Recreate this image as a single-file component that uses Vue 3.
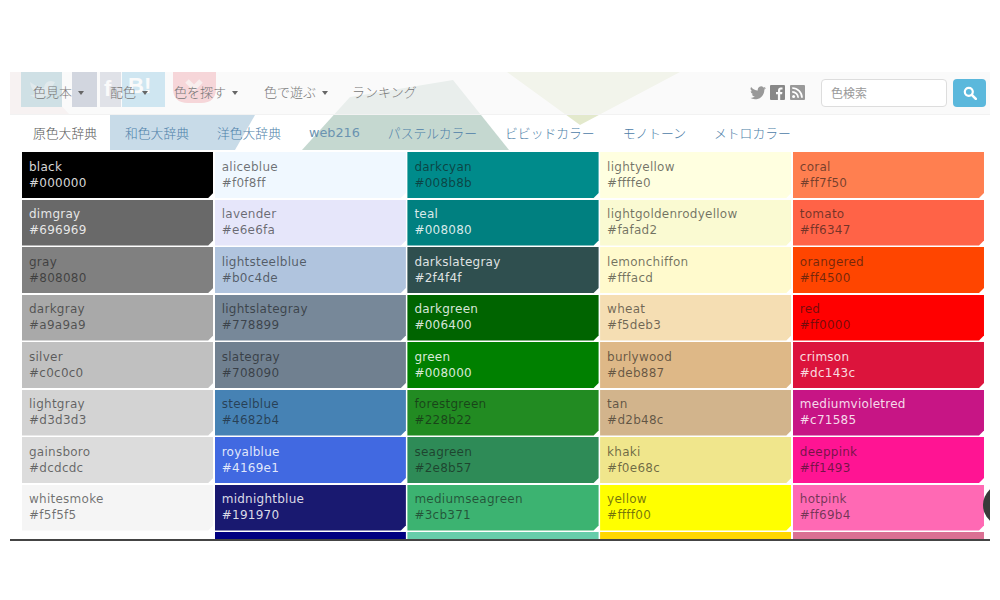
<script setup>
const navItems = [
  { label: '色見本', caret: true },
  { label: '配色', caret: true },
  { label: '色を探す', caret: true },
  { label: '色で遊ぶ', caret: true },
  { label: 'ランキング', caret: false },
];
const tabs = ['原色大辞典', '和色大辞典', '洋色大辞典', 'web216', 'パステルカラー', 'ビビッドカラー', 'モノトーン', 'メトロカラー'];

// row by row, w = white text, otherwise the text is a dark shade over the colour
const colors = [
  ['black', '#000000', 'w'], ['aliceblue', '#f0f8ff'], ['darkcyan', '#008b8b'], ['lightyellow', '#ffffe0'], ['coral', '#ff7f50'],
  ['dimgray', '#696969', 'w'], ['lavender', '#e6e6fa'], ['teal', '#008080', 'w'], ['lightgoldenrodyellow', '#fafad2'], ['tomato', '#ff6347'],
  ['gray', '#808080'], ['lightsteelblue', '#b0c4de'], ['darkslategray', '#2f4f4f', 'w'], ['lemonchiffon', '#fffacd'], ['orangered', '#ff4500'],
  ['darkgray', '#a9a9a9'], ['lightslategray', '#778899'], ['darkgreen', '#006400', 'w'], ['wheat', '#f5deb3'], ['red', '#ff0000'],
  ['silver', '#c0c0c0'], ['slategray', '#708090'], ['green', '#008000', 'w'], ['burlywood', '#deb887'], ['crimson', '#dc143c', 'w'],
  ['lightgray', '#d3d3d3'], ['steelblue', '#4682b4'], ['forestgreen', '#228b22'], ['tan', '#d2b48c'], ['mediumvioletred', '#c71585', 'w'],
  ['gainsboro', '#dcdcdc'], ['royalblue', '#4169e1', 'w'], ['seagreen', '#2e8b57'], ['khaki', '#f0e68c'], ['deeppink', '#ff1493'],
  ['whitesmoke', '#f5f5f5'], ['midnightblue', '#191970', 'w'], ['mediumseagreen', '#3cb371'], ['yellow', '#ffff00'], ['hotpink', '#ff69b4'],
];
// the next row is cut off by the frame before its text starts
const peekRow = ['#ffffff', '#000080', '#66cdaa', '#ffd700', '#db7093'];
</script>

<template>
  <div class="page">
    <div class="frame">
      <svg class="backdrop" width="980" height="467" viewBox="0 0 980 467">
        <polygon points="0,0 20,0 60,43 0,43" fill="#f3e4e4" />
        <polygon points="292,78 340,25 443,8 499,78" fill="#c5d8d0" />
        <polygon points="100,43 245,43 225,78 100,78" fill="#c8dbe8" />
        <polygon points="497,0 570,53 670,0" fill="#e3e9cc" />
        <rect x="11" y="0" width="41" height="35" fill="#6fa9b8" />
        <path d="M20 10q8 6 14 6q1-7 7-7l4 1-3 5q-1 10-12 11q-6 0-10-3q5 0 7-2q-6-3-7-11z" fill="#a9c7d1" />
        <rect x="62" y="0" width="25" height="35" fill="#7a86a6" />
        <rect x="90" y="0" width="21" height="35" fill="#a8aec4" />
        <text x="94" y="24" class="ghost-mark">f</text>
        <rect x="112" y="0" width="43" height="35" fill="#70bde0" />
        <text x="118" y="21" class="ghost-mark">B!</text>
        <path d="M163 0h43v16q0 15-15 15h-13q-15 0-15-15z" fill="#f0868f" />
        <path d="M177 9l7 7 7-7" fill="none" stroke="#f7d5d8" stroke-width="5" />
      </svg>

      <nav class="navbar">
        <ul class="menu">
          <li v-for="item in navItems" :key="item.label" class="menu-item">
            {{ item.label }}<span v-if="item.caret" class="caret"></span>
          </li>
        </ul>
        <div class="tools">
          <svg class="tool-icon" width="16" height="14" viewBox="0 0 24 20">
            <path fill="#999" d="M24 2.400a9.800 9.800 0 0 1-2.800.8A5 5 0 0 0 23.300.500a10 10 0 0 1-3.100 1.200 4.900 4.900 0 0 0-8.400 4.500A14 14 0 0 1 1.700.900a4.900 4.900 0 0 0 1.500 6.600 4.900 4.900 0 0 1-2.200-.6v.1a4.900 4.900 0 0 0 3.900 4.800 5 5 0 0 1-2.200.1 4.900 4.900 0 0 0 4.600 3.400A9.900 9.900 0 0 1 0 17.300 14 14 0 0 0 7.500 19.500c9.100 0 14-7.500 14-14v-.6A10 10 0 0 0 24 2.400z" />
          </svg>
          <svg class="tool-icon" width="15" height="15" viewBox="0 0 15 15">
            <path fill="#888" d="M1 0h13a1 1 0 0 1 1 1v13a1 1 0 0 1-1 1h-3.800V9.300h1.900l.3-2.200h-2.200V5.700c0-.6.200-1.100 1.100-1.100h1.200V2.600c-.2 0-.9-.1-1.700-.1-1.700 0-2.800 1-2.800 2.900v1.700H6v2.200h1.900V15H1a1 1 0 0 1-1-1V1a1 1 0 0 1 1-1z" />
          </svg>
          <svg class="tool-icon rss" width="15" height="15" viewBox="0 0 15 15">
            <rect width="15" height="15" rx="1" fill="#999" />
            <circle cx="3.600" cy="11.400" r="1.500" fill="#fff" />
            <path d="M2.200 6.800a6 6 0 0 1 6 6M2.200 3a9.800 9.800 0 0 1 9.800 9.800" fill="none" stroke="#fff" stroke-width="1.700" />
          </svg>
          <input class="search" type="text" placeholder="色検索" />
          <button class="search-btn" type="button" aria-label="検索">
            <svg width="14" height="14" viewBox="0 0 14 14">
              <circle cx="5.800" cy="5.800" r="4" fill="none" stroke="#fff" stroke-width="2.200" />
              <path d="M8.800 8.800l4 4" stroke="#fff" stroke-width="2.600" stroke-linecap="round" />
            </svg>
          </button>
        </div>
      </nav>

      <ul class="tabs">
        <li
          v-for="(tab, i) in tabs"
          :key="tab"
          class="tab"
          :class="{ active: i === 0, latin: tab === 'web216' }"
        >{{ tab }}</li>
      </ul>

      <div class="grid">
        <div
          v-for="c in colors"
          :key="c[0]"
          class="cell"
          :class="{ light: c[2] === 'w' }"
          :style="{ backgroundColor: c[1] }"
        >
          <div>{{ c[0] }}</div>
          <div>{{ c[1] }}</div>
        </div>
        <div v-for="bg in peekRow" :key="bg" class="cell" :style="{ backgroundColor: bg }"></div>
      </div>

      <div class="scroll-dot"></div>
    </div>
  </div>
</template>

<style>
body {
  background: #fff;
}
</style>

<style scoped>
.page {
  height: 600px;
  box-sizing: border-box;
  padding: 72px 10px 0;
  font-family: "DejaVu Sans", "Noto Sans CJK JP", sans-serif;
}
.frame {
  position: relative;
  height: 467px;
  overflow: hidden;
  border-bottom: 2px solid #444;
}
.backdrop {
  position: absolute;
  left: 0;
  top: 0;
}
.ghost-mark {
  font-family: "Liberation Sans", sans-serif;
  font-weight: 700;
  font-size: 22px;
  fill: #fff;
}
.navbar {
  position: relative;
  height: 43px;
  display: flex;
  align-items: center;
  justify-content: space-between;
  padding: 0 4px 0 23px;
  background: rgba(248, 248, 248, 0.7);
  border-bottom: 1px solid #f2f2f2;
  box-sizing: border-box;
}
.menu,
.tabs {
  list-style: none;
  margin: 0;
  padding: 0;
  display: flex;
}
.menu {
  gap: 26px;
  margin-top: -3px;
}
.menu-item {
  font-size: 13px;
  color: #777;
  font-family: "Noto Sans CJK JP", sans-serif;
  font-weight: 300;
}
.menu-item:last-child {
  margin-left: -2px;
}
.caret {
  display: inline-block;
  margin-left: 6px;
  vertical-align: middle;
  border-top: 4px solid #666;
  border-left: 3.500px solid transparent;
  border-right: 3.500px solid transparent;
}
.tools {
  display: flex;
  align-items: center;
  margin-top: -1px;
}
.tool-icon {
  margin-right: 4px;
}
.rss {
  margin-right: 16px;
  margin-left: 1px;
}
.search {
  width: 126px;
  height: 28px;
  box-sizing: border-box;
  border: 1px solid #ddd;
  border-radius: 4px;
  padding: 0 9px;
  font-size: 12px;
  background: #fff;
  font-family: "Noto Sans CJK JP", sans-serif;
}
.search::placeholder {
  color: #999;
}
.search-btn {
  width: 33px;
  height: 28px;
  margin-left: 6px;
  border: none;
  border-radius: 4px;
  background: #5bb8dc;
  display: flex;
  align-items: center;
  justify-content: center;
  padding: 0;
}
.tabs {
  position: relative;
  height: 35px;
  padding-left: 12px;
}
.tab {
  padding: 0 14px;
  line-height: 35px;
  font-size: 12.800px;
  color: #4d80a8;
  font-family: "Noto Sans CJK JP", sans-serif;
  font-weight: 300;
}
.tab.latin {
  font-family: "DejaVu Sans", sans-serif;
  font-weight: 400;
  color: #6b93b0;
}
.tab.active {
  padding: 0 13px 0 11px;
  background: #fff;
  color: #555;
  margin-right: 1px;
}
.grid {
  position: relative;
  margin: 2px 6px 0 12px;
  display: grid;
  grid-template-columns: repeat(5, 1fr);
  grid-auto-rows: 46px;
  gap: 1.500px;
}
.cell {
  padding: 6.500px 0 0 7px;
  font-size: 12px;
  line-height: 16px;
  letter-spacing: 0.250px;
  color: rgba(20, 20, 20, 0.6);
  clip-path: polygon(0 0, 100% 0, 100% calc(100% - 5px), calc(100% - 5px) 100%, 0 100%);
}
.cell.light {
  color: rgba(255, 255, 255, 0.85);
}
.scroll-dot {
  position: absolute;
  right: -35px;
  top: 412px;
  width: 42px;
  height: 42px;
  background: #3a3a3a;
  border-radius: 50%;
}
</style>
